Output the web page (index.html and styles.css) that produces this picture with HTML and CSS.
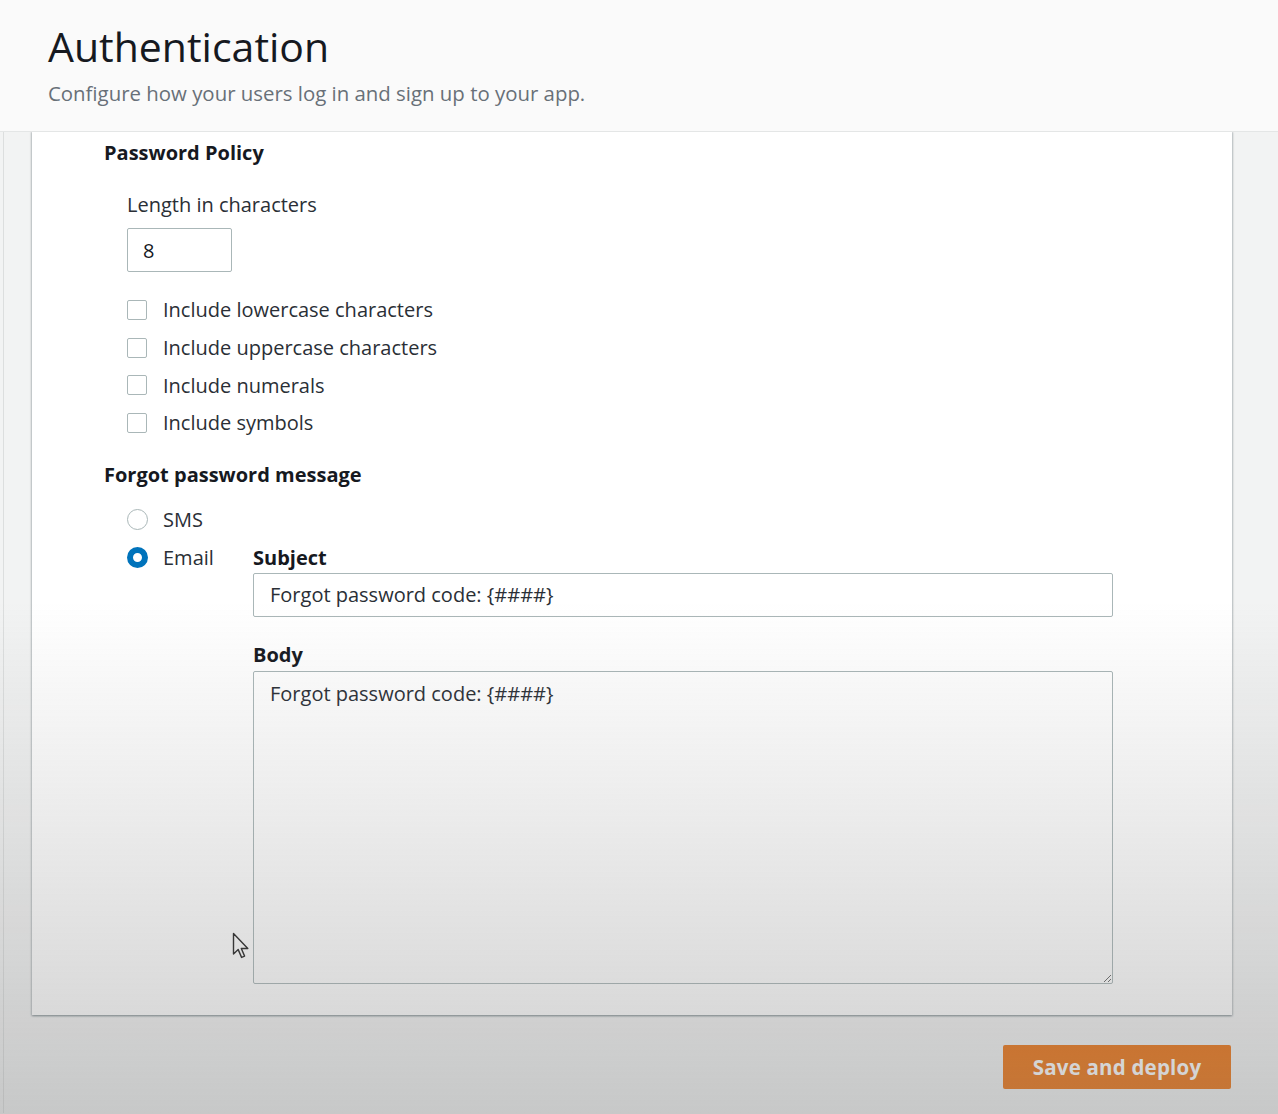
FILE: index.html
```html
<!DOCTYPE html>
<html lang="en">
<head>
<meta charset="utf-8">
<title>Authentication</title>
<link rel="stylesheet" href="styles.css">
</head>
<body>
<header class="page-header">
  <h1 class="page-title">Authentication</h1>
  <p class="page-subtitle">Configure how your users log in and sign up to your app.</p>
</header>
<main class="content">
  <section class="card">
    <h2 class="section-title">Password Policy</h2>
    <div class="indent">
      <div class="field-label">Length in characters</div>
      <input class="num-input" type="text" value="8">
      <ul class="checks">
        <li class="check-row"><span class="checkbox"></span><span>Include lowercase characters</span></li>
        <li class="check-row"><span class="checkbox"></span><span>Include uppercase characters</span></li>
        <li class="check-row"><span class="checkbox"></span><span>Include numerals</span></li>
        <li class="check-row"><span class="checkbox"></span><span>Include symbols</span></li>
      </ul>
    </div>
    <h2 class="section-title">Forgot password message</h2>
    <div class="indent forgot">
      <div class="radio-row"><span class="radio"></span><span>SMS</span></div>
      <div class="radio-col-spacer"></div>
      <div class="radio-row"><span class="radio radio-on"></span><span>Email</span></div>
      <div class="email-fields">
        <div class="bold-label">Subject</div>
        <input class="text-input" type="text" value="Forgot password code: {####}">
        <div class="bold-label body-label">Body</div>
        <textarea class="text-area">Forgot password code: {####}</textarea>
      </div>
    </div>
  </section>
  <div class="actions">
    <button class="primary-btn" type="button">Save and deploy</button>
  </div>
</main>
<div class="dim"></div>
<svg class="pointer" width="20" height="30" viewBox="0 0 20 30" aria-hidden="true">
  <path d="M1.5 1.5 L1.5 22 L6.2 17.6 L9.6 25.4 L12.6 24.1 L9.3 16.5 L15.8 16.5 Z" fill="#fff" stroke="#222" stroke-width="1.4" stroke-linejoin="round"/>
</svg>
</body>
</html>
```

FILE: styles.css
```css
* { box-sizing: border-box; }

html, body {
  margin: 0;
  padding: 0;
  height: 1114px;
  overflow: hidden;
}

body {
  background: #f2f3f3;
  font-family: "Open Sans", "Lato", sans-serif;
  color: #16191f;
  font-size: 20px;
  position: relative;
}

.page-header {
  background: #fafafa;
  height: 132px;
  border-bottom: 1px solid #e4e6e6;
  padding: 19px 48px 0;
  position: relative;
  z-index: 2;
}

.page-title {
  margin: 0;
  font-weight: 400;
  font-size: 41px;
  line-height: 54px;
  color: #16191f;
}

.page-subtitle {
  margin: 6px 0 0;
  font-size: 20.4px;
  line-height: 28px;
  color: #687078;
}

.content {
  margin-left: 3px;
  border-left: 1px solid #dcdede;
  padding: 0 46px 0 28px;
  height: 982px;
}

.card {
  background: #fff;
  margin-top: -1px;
  padding: 8px 0 31px 72px;
  box-shadow: 0 1px 2px 0 rgba(0, 28, 36, 0.3), 1px 1px 2px 0 rgba(0, 28, 36, 0.15), -1px 1px 2px 0 rgba(0, 28, 36, 0.15);
}

.section-title {
  margin: 0;
  font-size: 20px;
  font-weight: 700;
  line-height: 28px;
  color: #16191f;
}

.indent {
  padding-left: 23px;
}

.field-label {
  margin-top: 24px;
  line-height: 28px;
  color: #2a2f36;
}

.num-input {
  display: block;
  margin-top: 9px;
  width: 105px;
  height: 44px;
  border: 1px solid #aab7b8;
  border-radius: 2px;
  padding: 0 15px;
  font: inherit;
  color: #16191f;
  background: #fff;
}

.checks {
  list-style: none;
  margin: 19px 0 19px;
  padding: 0;
  color: #2a2f36;
}

.check-row {
  display: flex;
  align-items: center;
  gap: 16px;
  height: 37.7px;
}

.checkbox {
  width: 20px;
  height: 20px;
  border: 1px solid #aab7b8;
  border-radius: 2px;
  background: #fff;
  flex: none;
}

.forgot {
  display: grid;
  grid-template-columns: 126px 860px;
  grid-template-rows: 28px auto;
  row-gap: 10px;
  margin-top: 17px;
}

.radio-row {
  display: flex;
  align-items: center;
  gap: 15px;
  height: 28px;
  align-self: start;
  color: #2a2f36;
}

.radio {
  width: 21px;
  height: 21px;
  border-radius: 50%;
  border: 1px solid #aab7b8;
  background: #fff;
  flex: none;
}

.radio-on {
  border: 6.5px solid #0073bb;
  background: #fff;
}

.bold-label {
  font-weight: 700;
  line-height: 28px;
}

.text-input {
  display: block;
  margin-top: 1px;
  width: 860px;
  height: 44px;
  border: 1px solid #aab7b8;
  border-radius: 2px;
  padding: 0 16px;
  font: inherit;
  color: #2a2f36;
  background: #fff;
}

.body-label {
  margin-top: 24px;
}

.text-area {
  display: block;
  margin-top: 2px;
  width: 860px;
  height: 313px;
  border: 1px solid #aab7b8;
  border-radius: 2px;
  padding: 8px 16px;
  font: inherit;
  line-height: 28px;
  color: #2a2f36;
  background: #fff;
  resize: both;
}

.actions {
  display: flex;
  justify-content: flex-end;
  margin-top: 30px;
  padding-right: 1px;
}

.primary-btn {
  width: 228px;
  height: 44px;
  border: none;
  border-radius: 2px;
  background: #ec7211;
  color: #fff;
  font: inherit;
  font-size: 20.5px;
  font-weight: 700;
  letter-spacing: 0.2px;
}

.dim {
  position: fixed;
  inset: 0;
  pointer-events: none;
  z-index: 5;
  background: linear-gradient(to bottom, rgba(125, 125, 125, 0) 54%, rgba(125, 125, 125, 0.36) 100%);
}

.pointer {
  position: absolute;
  left: 232px;
  top: 932px;
  z-index: 4;
}
```
